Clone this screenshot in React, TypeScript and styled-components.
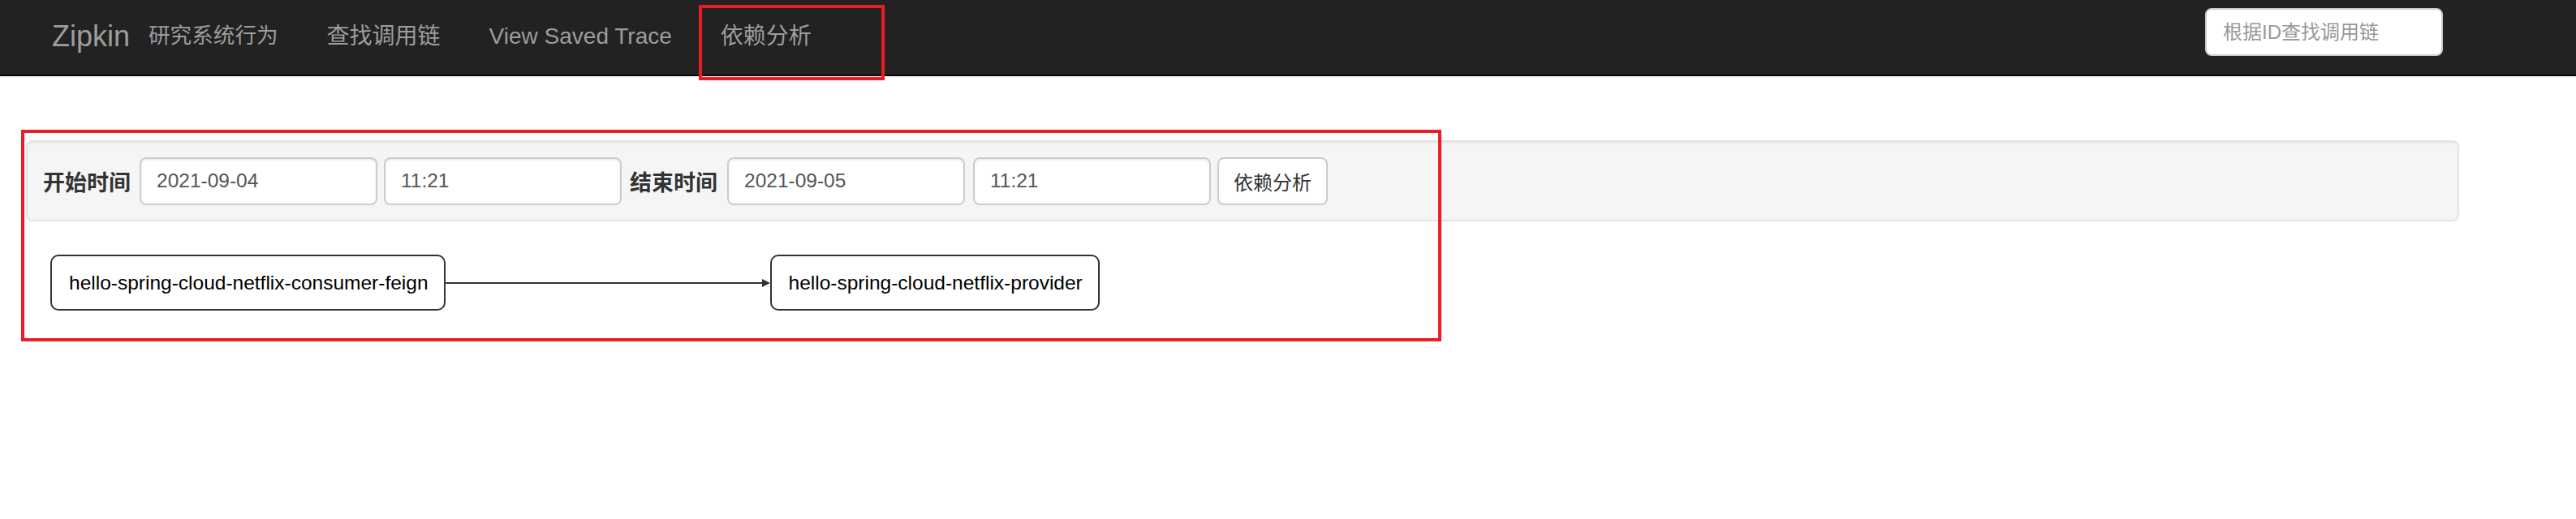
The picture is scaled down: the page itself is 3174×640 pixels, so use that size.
import React from "react";
import styled, { createGlobalStyle } from "styled-components";

const GlobalStyle = createGlobalStyle`
  html, body {
    margin: 0;
    padding: 0;
    background: #fff;
    font-family: "Liberation Sans", Arial, "Noto Sans CJK SC", sans-serif;
  }
`;

const Page = styled.div`
  position: relative;
  width: 3174px;
  min-height: 640px;
`;

const Navbar = styled.nav`
  display: flex;
  align-items: center;
  height: 92px;
  background: #222;
  border-bottom: 2px solid #080808;
  padding: 0 164px 0 64px;
`;

const Brand = styled.span`
  font-size: 36px;
  color: #9d9d9d;
  line-height: 1;
  margin-bottom: 3px;
`;

const NavItem = styled.span<{ small?: boolean }>`
  font-size: ${({ small }) => (small ? "26.6px" : "28px")};
  color: #9d9d9d;
  padding: ${({ small }) => (small ? "0 30px 0 23px" : "0 30px")};
  margin-bottom: 3px;
  line-height: 1;
  white-space: nowrap;
`;

const SearchInput = styled.input`
  margin: 0 0 13px auto;
  width: 293px;
  height: 59px;
  box-sizing: border-box;
  border: 2px solid #ccc;
  border-radius: 8px;
  padding: 0 20px;
  font-family: inherit;
  font-size: 24px;
  color: #555;
  background: #fff;
  &::placeholder {
    color: #999;
  }
`;

const Content = styled.main`
  padding: 79px 144px 0 32px;
`;

const Well = styled.div`
  display: flex;
  align-items: center;
  height: 100px;
  box-sizing: border-box;
  background: #f5f5f5;
  border: 2px solid #e3e3e3;
  border-radius: 8px;
  box-shadow: inset 0 2px 2px rgba(0, 0, 0, 0.05);
  padding: 0 19px;
`;

const Label = styled.span<{ gap: number }>`
  font-size: 27px;
  font-weight: bold;
  color: #333;
  margin-right: ${({ gap }) => gap}px;
  white-space: nowrap;
`;

const Field = styled.input<{ gap: number }>`
  width: 293px;
  height: 59px;
  box-sizing: border-box;
  border: 2px solid #ccc;
  border-radius: 8px;
  box-shadow: inset 0 2px 2px rgba(0, 0, 0, 0.075);
  padding: 0 19px;
  margin-right: ${({ gap }) => gap}px;
  font-family: inherit;
  font-size: 24.5px;
  color: #555;
  background: #fff;
`;

const Button = styled.button`
  height: 59px;
  box-sizing: border-box;
  padding: 0 18px;
  border: 2px solid #ccc;
  border-radius: 8px;
  background: #fff;
  color: #333;
  font-family: inherit;
  font-size: 24px;
`;

const Graph = styled.div`
  display: flex;
  align-items: center;
  padding: 41px 0 0 30px;
`;

const Node = styled.div`
  display: flex;
  align-items: center;
  height: 69px;
  box-sizing: border-box;
  padding: 0 19px 0 21px;
  border: 2px solid #333;
  border-radius: 10px;
  font-size: 24.5px;
  color: #000;
  white-space: nowrap;
`;

const Annotation = styled.div<{ x: number; y: number; w: number; h: number }>`
  position: absolute;
  left: ${({ x }) => x}px;
  top: ${({ y }) => y}px;
  width: ${({ w }) => w}px;
  height: ${({ h }) => h}px;
  box-sizing: border-box;
  border: 4px solid #ea1d25;
  pointer-events: none;
`;

const Edge = ({ length }: { length: number }) => (
  <svg width={length} height={14} viewBox={`0 0 ${length} 14`} style={{ display: "block" }}>
    <line x1={0} y1={7} x2={length - 8} y2={7} stroke="#333" strokeWidth={2} />
    <path d={`M${length - 10} 2 L${length} 7 L${length - 10} 12 Z`} fill="#333" />
  </svg>
);

export default function App() {
  return (
    <Page>
      <GlobalStyle />
      <Navbar>
        <Brand>Zipkin</Brand>
        <NavItem small>研究系统行为</NavItem>
        <NavItem>查找调用链</NavItem>
        <NavItem>View Saved Trace</NavItem>
        <NavItem>依赖分析</NavItem>
        <SearchInput placeholder="根据ID查找调用链" />
      </Navbar>
      <Content>
        <Well>
          <Label gap={11}>开始时间</Label>
          <Field gap={8} defaultValue="2021-09-04" />
          <Field gap={10} defaultValue="11:21" />
          <Label gap={12}>结束时间</Label>
          <Field gap={10} defaultValue="2021-09-05" />
          <Field gap={8} defaultValue="11:21" />
          <Button>依赖分析</Button>
        </Well>
        <Graph>
          <Node>hello-spring-cloud-netflix-consumer-feign</Node>
          <Edge length={400} />
          <Node>hello-spring-cloud-netflix-provider</Node>
        </Graph>
      </Content>
      <Annotation x={861} y={6} w={229} h={93} />
      <Annotation x={26} y={160} w={1750} h={261} />
    </Page>
  );
}
